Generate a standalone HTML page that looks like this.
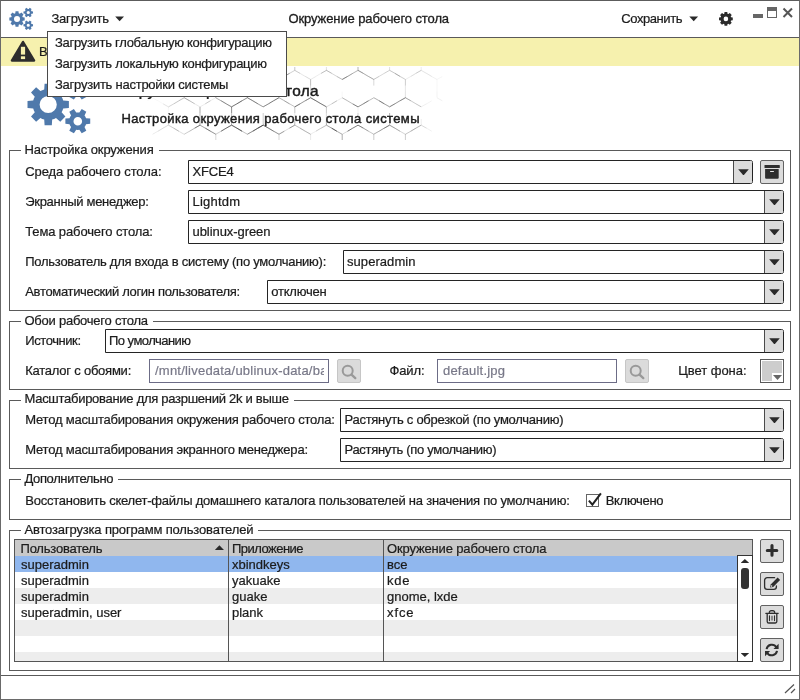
<!DOCTYPE html>
<html lang="ru"><head><meta charset="utf-8"><title>Окружение рабочего стола</title>
<style>
html,body{margin:0;padding:0;background:#fff;}
body{width:800px;height:700px;overflow:hidden;font-family:"Liberation Sans",sans-serif;font-size:13px;color:#1c1c1c;}
#win{position:relative;width:800px;height:700px;background:#fff;overflow:hidden;will-change:transform;}
#win *{box-sizing:border-box;}
.abs,.t,.fs,.combo,.btn,.inp,.row{position:absolute;}
.t{white-space:pre;line-height:16px;height:16px;-webkit-text-stroke:0.22px #1c1c1c;}
.fs{border:1px solid #5a5a5a;}
.combo{height:24px;border:1px solid #242424;border-radius:0 2.5px 2.5px 0;background:#fff;}
.combo i{position:absolute;right:0;top:0;bottom:0;width:19px;background:#dcdcdc;border-left:1px solid #4a4a4a;border-radius:0 1px 1px 0;}
.combo i:after{content:"";position:absolute;left:4.2px;top:8.3px;width:10.6px;height:6.2px;background:#2a2a2a;clip-path:polygon(0 0,100% 0,50% 100%);}
.btn{width:24px;height:24px;border:1px solid #626262;border-radius:2px;background:#dcdcdc;}
.btn.dis{background:#dbdbdb;border-color:#c6c6c6;}
.btn svg{position:absolute;left:0;top:0;}
.inp{height:24px;border:1px solid #6c6c86;background:#fff;color:#787888;white-space:pre;line-height:22px;-webkit-text-stroke:0.2px #787888;}
.inp>div{position:absolute;left:5px;right:4px;top:0;height:22px;overflow:hidden;}
.row{left:15px;width:722px;height:16px;}

</style></head>
<body>
<div id="win">
<!-- header -->
<div class="abs" style="left:1px;top:37px;width:798px;height:1px;background:#5a5a5a"></div>
<svg class="abs" style="left:0;top:0" width="40" height="36" viewBox="0 0 40 36"><path fill="#4f79ab" fill-rule="evenodd" d="M22.75 17.28L24.66 17.54L24.66 20.46L22.75 20.72A6.00 6.00 0 0 1 22.28 21.85L23.45 23.38L21.38 25.45L19.85 24.28A6.00 6.00 0 0 1 18.72 24.75L18.46 26.66L15.54 26.66L15.28 24.75A6.00 6.00 0 0 1 14.15 24.28L12.62 25.45L10.55 23.38L11.72 21.85A6.00 6.00 0 0 1 11.25 20.72L9.34 20.46L9.34 17.54L11.25 17.28A6.00 6.00 0 0 1 11.72 16.15L10.55 14.62L12.62 12.55L14.15 13.72A6.00 6.00 0 0 1 15.28 13.25L15.54 11.34L18.46 11.34L18.72 13.25A6.00 6.00 0 0 1 19.85 13.72L21.38 12.55L23.45 14.62L22.28 16.15A6.00 6.00 0 0 1 22.75 17.28ZM20.00 19.00A3.00 3.00 0 1 0 14.00 19.00A3.00 3.00 0 1 0 20.00 19.00Z"/><path fill="#4f79ab" fill-rule="evenodd" d="M31.50 11.21L33.03 11.43L33.03 13.57L31.50 13.79A3.50 3.50 0 0 1 30.99 14.67L31.57 16.11L29.72 17.18L28.76 15.96A3.50 3.50 0 0 1 27.74 15.96L26.78 17.18L24.93 16.11L25.51 14.67A3.50 3.50 0 0 1 25.00 13.79L23.47 13.57L23.47 11.43L25.00 11.21A3.50 3.50 0 0 1 25.51 10.33L24.93 8.89L26.78 7.82L27.74 9.04A3.50 3.50 0 0 1 28.76 9.04L29.72 7.82L31.57 8.89L30.99 10.33A3.50 3.50 0 0 1 31.50 11.21ZM29.85 12.50A1.60 1.60 0 1 0 26.65 12.50A1.60 1.60 0 1 0 29.85 12.50Z"/><path fill="#4f79ab" fill-rule="evenodd" d="M31.50 23.96L33.03 24.18L33.03 26.32L31.50 26.54A3.50 3.50 0 0 1 30.99 27.42L31.57 28.86L29.72 29.93L28.76 28.71A3.50 3.50 0 0 1 27.74 28.71L26.78 29.93L24.93 28.86L25.51 27.42A3.50 3.50 0 0 1 25.00 26.54L23.47 26.32L23.47 24.18L25.00 23.96A3.50 3.50 0 0 1 25.51 23.08L24.93 21.64L26.78 20.57L27.74 21.79A3.50 3.50 0 0 1 28.76 21.79L29.72 20.57L31.57 21.64L30.99 23.08A3.50 3.50 0 0 1 31.50 23.96ZM29.85 25.25A1.60 1.60 0 1 0 26.65 25.25A1.60 1.60 0 1 0 29.85 25.25Z"/></svg>
<svg class="abs" style="left:113px;top:14px" width="14" height="10" viewBox="113 14 14 10"><path d="M115.2 16.4 H124 L119.6 21.2 Z" fill="#2a2a2a"/></svg>
<svg class="abs" style="left:687px;top:14px" width="14" height="10" viewBox="687 14 14 10"><path d="M689.3 16.4 H698.1 L693.7 21.2 Z" fill="#2a2a2a"/></svg>
<svg class="abs" style="left:716px;top:9px" width="20" height="20" viewBox="716 9 20 20"><path fill="#2b2b2b" fill-rule="evenodd" d="M731.05 17.27L732.77 17.53L732.77 20.27L731.05 20.53A5.40 5.40 0 0 1 730.69 21.39L731.72 22.79L729.79 24.72L728.39 23.69A5.40 5.40 0 0 1 727.53 24.05L727.27 25.77L724.53 25.77L724.27 24.05A5.40 5.40 0 0 1 723.41 23.69L722.01 24.72L720.08 22.79L721.11 21.39A5.40 5.40 0 0 1 720.75 20.53L719.03 20.27L719.03 17.53L720.75 17.27A5.40 5.40 0 0 1 721.11 16.41L720.08 15.01L722.01 13.08L723.41 14.11A5.40 5.40 0 0 1 724.27 13.75L724.53 12.03L727.27 12.03L727.53 13.75A5.40 5.40 0 0 1 728.39 14.11L729.79 13.08L731.72 15.01L730.69 16.41A5.40 5.40 0 0 1 731.05 17.27ZM728.20 18.90A2.30 2.30 0 1 0 723.60 18.90A2.30 2.30 0 1 0 728.20 18.90Z"/></svg>
<!-- window controls -->
<div class="abs" style="left:753px;top:14px;width:10px;height:4px;background:#666"></div>
<div class="abs" style="left:767px;top:7px;width:10px;height:11px;border:1px solid #666;border-top-width:4px"></div>
<svg class="abs" style="left:782px;top:7px" width="12" height="12" viewBox="0 0 12 12"><path d="M1.5 1.5 L10 10 M10 1.5 L1.5 10" stroke="#555" stroke-width="2" fill="none"/></svg>
<!-- yellow bar -->
<div class="abs" style="left:1px;top:38px;width:798px;height:28px;background:#f6f1ae"></div>
<svg class="abs" style="left:10px;top:39px" width="26" height="24" viewBox="0 0 26 24"><path d="M13 2.8 L24.2 21.6 L1.8 21.6 Z" fill="#2d2d2d" stroke="#2d2d2d" stroke-width="2.2" stroke-linejoin="round"/><rect x="10.9" y="7.8" width="4.2" height="7.8" fill="#f6f1ae"/><rect x="10.9" y="17.3" width="4.2" height="2.8" fill="#f6f1ae"/></svg>
<!-- banner -->
<svg class="abs" style="left:110px;top:67px" width="400" height="73" viewBox="110 67 400 73"><g stroke="#333" stroke-width="0.8" fill="none"><path d="M152.6 97.7L147.3 100.7" stroke-opacity="0.04"/><path d="M178.9 76.5L184.2 79.5" stroke-opacity="0.05"/><path d="M184.2 97.7L184.2 91.6" stroke-opacity="0.16"/><path d="M184.2 91.6L184.2 85.6" stroke-opacity="0.26"/><path d="M184.2 85.6L184.2 79.5" stroke-opacity="0.27"/><path d="M184.2 97.7L178.9 100.7" stroke-opacity="0.21"/><path d="M168.4 106.8L163.1 103.8" stroke-opacity="0.11"/><path d="M163.1 103.8L157.9 100.7" stroke-opacity="0.04"/><path d="M152.6 79.5L157.9 76.5" stroke-opacity="0.05"/><path d="M157.9 76.5L163.1 73.4" stroke-opacity="0.05"/><path d="M163.1 73.4L168.4 70.4" stroke-opacity="0.13"/><path d="M200.0 70.4L205.3 73.4" stroke-opacity="0.22"/><path d="M205.3 73.4L210.5 76.5" stroke-opacity="0.37"/><path d="M210.5 76.5L215.8 79.5" stroke-opacity="0.35"/><path d="M215.8 97.7L215.8 91.6" stroke-opacity="0.50"/><path d="M215.8 91.6L215.8 85.6" stroke-opacity="0.32"/><path d="M215.8 85.6L215.8 79.5" stroke-opacity="0.51"/><path d="M215.8 97.7L210.5 100.7" stroke-opacity="0.11"/><path d="M210.5 100.7L205.3 103.8" stroke-opacity="0.34"/><path d="M200.0 106.8L194.7 103.8" stroke-opacity="0.09"/><path d="M194.7 103.8L189.5 100.7" stroke-opacity="0.40"/><path d="M189.5 100.7L184.2 97.7" stroke-opacity="0.40"/><path d="M184.2 79.5L189.5 76.5" stroke-opacity="0.29"/><path d="M189.5 76.5L194.7 73.4" stroke-opacity="0.16"/><path d="M194.7 73.4L200.0 70.4" stroke-opacity="0.31"/><path d="M231.6 70.4L236.9 73.4" stroke-opacity="0.33"/><path d="M236.9 73.4L242.1 76.5" stroke-opacity="0.28"/><path d="M242.1 76.5L247.4 79.5" stroke-opacity="0.43"/><path d="M247.4 97.7L247.4 91.6" stroke-opacity="0.43"/><path d="M247.4 91.6L247.4 85.6" stroke-opacity="0.50"/><path d="M247.4 85.6L247.4 79.5" stroke-opacity="0.26"/><path d="M247.4 97.7L242.1 100.7" stroke-opacity="0.66"/><path d="M242.1 100.7L236.9 103.8" stroke-opacity="0.85"/><path d="M236.9 103.8L231.6 106.8" stroke-opacity="0.78"/><path d="M231.6 106.8L226.3 103.8" stroke-opacity="0.20"/><path d="M226.3 103.8L221.1 100.7" stroke-opacity="0.39"/><path d="M215.8 79.5L221.1 76.5" stroke-opacity="0.10"/><path d="M221.1 76.5L226.3 73.4" stroke-opacity="0.08"/><path d="M226.3 73.4L231.6 70.4" stroke-opacity="0.06"/><path d="M263.2 70.4L268.5 73.4" stroke-opacity="0.21"/><path d="M268.5 73.4L273.7 76.5" stroke-opacity="0.26"/><path d="M273.7 76.5L279.0 79.5" stroke-opacity="0.32"/><path d="M279.0 97.7L279.0 91.6" stroke-opacity="0.24"/><path d="M279.0 91.6L279.0 85.6" stroke-opacity="0.39"/><path d="M279.0 85.6L279.0 79.5" stroke-opacity="0.43"/><path d="M279.0 97.7L273.7 100.7" stroke-opacity="0.85"/><path d="M273.7 100.7L268.5 103.8" stroke-opacity="0.85"/><path d="M268.5 103.8L263.2 106.8" stroke-opacity="0.54"/><path d="M263.2 106.8L257.9 103.8" stroke-opacity="0.27"/><path d="M257.9 103.8L252.7 100.7" stroke-opacity="0.63"/><path d="M252.7 100.7L247.4 97.7" stroke-opacity="0.68"/><path d="M294.8 70.4L300.1 73.4" stroke-opacity="0.29"/><path d="M300.1 73.4L305.3 76.5" stroke-opacity="0.15"/><path d="M305.3 76.5L310.6 79.5" stroke-opacity="0.05"/><path d="M310.6 97.7L310.6 91.6" stroke-opacity="0.17"/><path d="M310.6 91.6L310.6 85.6" stroke-opacity="0.25"/><path d="M310.6 85.6L310.6 79.5" stroke-opacity="0.41"/><path d="M310.6 97.7L305.3 100.7" stroke-opacity="0.57"/><path d="M305.3 100.7L300.1 103.8" stroke-opacity="0.63"/><path d="M300.1 103.8L294.8 106.8" stroke-opacity="0.67"/><path d="M294.8 106.8L289.5 103.8" stroke-opacity="0.39"/><path d="M289.5 103.8L284.3 100.7" stroke-opacity="0.31"/><path d="M284.3 100.7L279.0 97.7" stroke-opacity="0.38"/><path d="M279.0 79.5L284.3 76.5" stroke-opacity="0.33"/><path d="M284.3 76.5L289.5 73.4" stroke-opacity="0.34"/><path d="M289.5 73.4L294.8 70.4" stroke-opacity="0.21"/><path d="M326.4 70.4L331.7 73.4" stroke-opacity="0.13"/><path d="M331.7 73.4L336.9 76.5" stroke-opacity="0.13"/><path d="M336.9 76.5L342.2 79.5" stroke-opacity="0.19"/><path d="M342.2 97.7L342.2 91.6" stroke-opacity="0.05"/><path d="M336.9 100.7L331.7 103.8" stroke-opacity="0.10"/><path d="M326.4 106.8L321.1 103.8" stroke-opacity="0.76"/><path d="M321.1 103.8L315.9 100.7" stroke-opacity="0.44"/><path d="M315.9 100.7L310.6 97.7" stroke-opacity="0.51"/><path d="M310.6 79.5L315.9 76.5" stroke-opacity="0.14"/><path d="M321.1 73.4L326.4 70.4" stroke-opacity="0.34"/><path d="M358.0 70.4L363.3 73.4" stroke-opacity="0.44"/><path d="M363.3 73.4L368.5 76.5" stroke-opacity="0.45"/><path d="M368.5 76.5L373.8 79.5" stroke-opacity="0.29"/><path d="M373.8 85.6L373.8 79.5" stroke-opacity="0.23"/><path d="M368.5 100.7L363.3 103.8" stroke-opacity="0.50"/><path d="M363.3 103.8L358.0 106.8" stroke-opacity="0.21"/><path d="M358.0 106.8L352.7 103.8" stroke-opacity="0.21"/><path d="M347.5 100.7L342.2 97.7" stroke-opacity="0.20"/><path d="M342.2 79.5L347.5 76.5" stroke-opacity="0.51"/><path d="M347.5 76.5L352.7 73.4" stroke-opacity="0.51"/><path d="M352.7 73.4L358.0 70.4" stroke-opacity="0.35"/><path d="M389.6 70.4L394.9 73.4" stroke-opacity="0.06"/><path d="M394.9 73.4L400.1 76.5" stroke-opacity="0.24"/><path d="M400.1 76.5L405.4 79.5" stroke-opacity="0.14"/><path d="M405.4 97.7L405.4 91.6" stroke-opacity="0.19"/><path d="M405.4 91.6L405.4 85.6" stroke-opacity="0.16"/><path d="M405.4 85.6L405.4 79.5" stroke-opacity="0.31"/><path d="M405.4 97.7L400.1 100.7" stroke-opacity="0.57"/><path d="M400.1 100.7L394.9 103.8" stroke-opacity="0.65"/><path d="M394.9 103.8L389.6 106.8" stroke-opacity="0.73"/><path d="M389.6 106.8L384.3 103.8" stroke-opacity="0.39"/><path d="M384.3 103.8L379.1 100.7" stroke-opacity="0.60"/><path d="M379.1 100.7L373.8 97.7" stroke-opacity="0.49"/><path d="M421.2 70.4L426.5 73.4" stroke-opacity="0.17"/><path d="M426.5 73.4L431.7 76.5" stroke-opacity="0.08"/><path d="M431.7 76.5L437.0 79.5" stroke-opacity="0.09"/><path d="M437.0 97.7L437.0 91.6" stroke-opacity="0.07"/><path d="M437.0 91.6L437.0 85.6" stroke-opacity="0.06"/><path d="M437.0 85.6L437.0 79.5" stroke-opacity="0.05"/><path d="M426.5 103.8L421.2 106.8" stroke-opacity="0.10"/><path d="M421.2 106.8L415.9 103.8" stroke-opacity="0.34"/><path d="M415.9 103.8L410.7 100.7" stroke-opacity="0.33"/><path d="M410.7 100.7L405.4 97.7" stroke-opacity="0.46"/><path d="M405.4 79.5L410.7 76.5" stroke-opacity="0.12"/><path d="M410.7 76.5L415.9 73.4" stroke-opacity="0.22"/><path d="M415.9 73.4L421.2 70.4" stroke-opacity="0.21"/><path d="M437.0 79.5L442.3 76.5" stroke-opacity="0.06"/><path d="M152.6 97.8L157.9 100.8" stroke-opacity="0.05"/><path d="M163.1 103.9L168.4 106.9" stroke-opacity="0.06"/><path d="M168.4 125.1L168.4 119.0" stroke-opacity="0.16"/><path d="M168.4 113.0L168.4 106.9" stroke-opacity="0.05"/><path d="M168.4 125.1L163.1 128.1" stroke-opacity="0.24"/><path d="M163.1 128.1L157.9 131.2" stroke-opacity="0.10"/><path d="M157.9 131.2L152.6 134.2" stroke-opacity="0.08"/><path d="M184.2 97.8L189.5 100.8" stroke-opacity="0.19"/><path d="M194.7 103.9L200.0 106.9" stroke-opacity="0.06"/><path d="M200.0 125.1L200.0 119.0" stroke-opacity="0.56"/><path d="M200.0 119.0L200.0 113.0" stroke-opacity="0.42"/><path d="M200.0 113.0L200.0 106.9" stroke-opacity="0.53"/><path d="M200.0 125.1L194.7 128.1" stroke-opacity="0.56"/><path d="M194.7 128.1L189.5 131.2" stroke-opacity="0.15"/><path d="M189.5 131.2L184.2 134.2" stroke-opacity="0.20"/><path d="M178.9 131.2L173.7 128.1" stroke-opacity="0.21"/><path d="M173.7 128.1L168.4 125.1" stroke-opacity="0.10"/><path d="M168.4 106.9L173.7 103.9" stroke-opacity="0.26"/><path d="M173.7 103.9L178.9 100.8" stroke-opacity="0.36"/><path d="M178.9 100.8L184.2 97.8" stroke-opacity="0.24"/><path d="M215.8 97.8L221.1 100.8" stroke-opacity="0.51"/><path d="M221.1 100.8L226.3 103.9" stroke-opacity="0.51"/><path d="M226.3 103.9L231.6 106.9" stroke-opacity="0.63"/><path d="M231.6 125.1L231.6 119.0" stroke-opacity="0.42"/><path d="M231.6 119.0L231.6 113.0" stroke-opacity="0.38"/><path d="M231.6 113.0L231.6 106.9" stroke-opacity="0.69"/><path d="M231.6 125.1L226.3 128.1" stroke-opacity="0.82"/><path d="M226.3 128.1L221.1 131.2" stroke-opacity="0.85"/><path d="M221.1 131.2L215.8 134.2" stroke-opacity="0.24"/><path d="M215.8 134.2L210.5 131.2" stroke-opacity="0.46"/><path d="M210.5 131.2L205.3 128.1" stroke-opacity="0.70"/><path d="M205.3 128.1L200.0 125.1" stroke-opacity="0.21"/><path d="M200.0 106.9L205.3 103.9" stroke-opacity="0.12"/><path d="M247.4 97.8L252.7 100.8" stroke-opacity="0.25"/><path d="M252.7 100.8L257.9 103.9" stroke-opacity="0.33"/><path d="M257.9 103.9L263.2 106.9" stroke-opacity="0.40"/><path d="M263.2 125.1L263.2 119.0" stroke-opacity="0.34"/><path d="M263.2 119.0L263.2 113.0" stroke-opacity="0.30"/><path d="M263.2 125.1L257.9 128.1" stroke-opacity="0.85"/><path d="M257.9 128.1L252.7 131.2" stroke-opacity="0.49"/><path d="M252.7 131.2L247.4 134.2" stroke-opacity="0.51"/><path d="M247.4 134.2L242.1 131.2" stroke-opacity="0.21"/><path d="M242.1 131.2L236.9 128.1" stroke-opacity="0.69"/><path d="M236.9 128.1L231.6 125.1" stroke-opacity="0.58"/><path d="M231.6 106.9L236.9 103.9" stroke-opacity="0.15"/><path d="M236.9 103.9L242.1 100.8" stroke-opacity="0.21"/><path d="M242.1 100.8L247.4 97.8" stroke-opacity="0.09"/><path d="M279.0 97.8L284.3 100.8" stroke-opacity="0.09"/><path d="M284.3 100.8L289.5 103.9" stroke-opacity="0.37"/><path d="M294.8 125.1L294.8 119.0" stroke-opacity="0.42"/><path d="M294.8 119.0L294.8 113.0" stroke-opacity="0.13"/><path d="M294.8 113.0L294.8 106.9" stroke-opacity="0.35"/><path d="M294.8 125.1L289.5 128.1" stroke-opacity="0.52"/><path d="M289.5 128.1L284.3 131.2" stroke-opacity="0.21"/><path d="M284.3 131.2L279.0 134.2" stroke-opacity="0.50"/><path d="M279.0 134.2L273.7 131.2" stroke-opacity="0.51"/><path d="M273.7 131.2L268.5 128.1" stroke-opacity="0.35"/><path d="M268.5 128.1L263.2 125.1" stroke-opacity="0.46"/><path d="M263.2 106.9L268.5 103.9" stroke-opacity="0.30"/><path d="M310.6 97.8L315.9 100.8" stroke-opacity="0.65"/><path d="M315.9 100.8L321.1 103.9" stroke-opacity="0.59"/><path d="M321.1 103.9L326.4 106.9" stroke-opacity="0.21"/><path d="M326.4 125.1L326.4 119.0" stroke-opacity="0.47"/><path d="M326.4 119.0L326.4 113.0" stroke-opacity="0.23"/><path d="M326.4 113.0L326.4 106.9" stroke-opacity="0.32"/><path d="M321.1 128.1L315.9 131.2" stroke-opacity="0.27"/><path d="M315.9 131.2L310.6 134.2" stroke-opacity="0.06"/><path d="M310.6 134.2L305.3 131.2" stroke-opacity="0.26"/><path d="M305.3 131.2L300.1 128.1" stroke-opacity="0.23"/><path d="M300.1 128.1L294.8 125.1" stroke-opacity="0.34"/><path d="M294.8 106.9L300.1 103.9" stroke-opacity="0.38"/><path d="M305.3 100.8L310.6 97.8" stroke-opacity="0.39"/><path d="M342.2 97.8L347.5 100.8" stroke-opacity="0.28"/><path d="M347.5 100.8L352.7 103.9" stroke-opacity="0.43"/><path d="M352.7 103.9L358.0 106.9" stroke-opacity="0.68"/><path d="M358.0 119.0L358.0 113.0" stroke-opacity="0.29"/><path d="M358.0 113.0L358.0 106.9" stroke-opacity="0.09"/><path d="M342.2 134.2L336.9 131.2" stroke-opacity="0.10"/><path d="M336.9 131.2L331.7 128.1" stroke-opacity="0.47"/><path d="M331.7 128.1L326.4 125.1" stroke-opacity="0.15"/><path d="M326.4 106.9L331.7 103.9" stroke-opacity="0.21"/><path d="M331.7 103.9L336.9 100.8" stroke-opacity="0.32"/><path d="M336.9 100.8L342.2 97.8" stroke-opacity="0.10"/><path d="M379.1 100.8L384.3 103.9" stroke-opacity="0.41"/><path d="M384.3 103.9L389.6 106.9" stroke-opacity="0.28"/><path d="M389.6 125.1L389.6 119.0" stroke-opacity="0.18"/><path d="M389.6 119.0L389.6 113.0" stroke-opacity="0.46"/><path d="M389.6 125.1L384.3 128.1" stroke-opacity="0.57"/><path d="M384.3 128.1L379.1 131.2" stroke-opacity="0.64"/><path d="M379.1 131.2L373.8 134.2" stroke-opacity="0.51"/><path d="M373.8 134.2L368.5 131.2" stroke-opacity="0.21"/><path d="M368.5 131.2L363.3 128.1" stroke-opacity="0.48"/><path d="M363.3 128.1L358.0 125.1" stroke-opacity="0.68"/><path d="M358.0 106.9L363.3 103.9" stroke-opacity="0.54"/><path d="M363.3 103.9L368.5 100.8" stroke-opacity="0.46"/><path d="M368.5 100.8L373.8 97.8" stroke-opacity="0.41"/><path d="M405.4 97.8L410.7 100.8" stroke-opacity="0.15"/><path d="M415.9 103.9L421.2 106.9" stroke-opacity="0.04"/><path d="M421.2 125.1L421.2 119.0" stroke-opacity="0.11"/><path d="M421.2 125.1L415.9 128.1" stroke-opacity="0.15"/><path d="M415.9 128.1L410.7 131.2" stroke-opacity="0.19"/><path d="M410.7 131.2L405.4 134.2" stroke-opacity="0.09"/><path d="M400.1 131.2L394.9 128.1" stroke-opacity="0.10"/><path d="M394.9 128.1L389.6 125.1" stroke-opacity="0.21"/><path d="M389.6 106.9L394.9 103.9" stroke-opacity="0.13"/><path d="M400.1 100.8L405.4 97.8" stroke-opacity="0.34"/><path d="M437.0 97.8L442.3 100.8" stroke-opacity="0.09"/><path d="M431.7 131.2L426.5 128.1" stroke-opacity="0.09"/><path d="M426.5 128.1L421.2 125.1" stroke-opacity="0.05"/><path d="M426.5 103.9L431.7 100.8" stroke-opacity="0.07"/><path d="M168.4 125.2L173.7 128.2" stroke-opacity="0.22"/><path d="M173.7 128.2L178.9 131.3" stroke-opacity="0.27"/><path d="M178.9 131.3L184.2 134.3" stroke-opacity="0.20"/><path d="M152.6 134.3L157.9 131.3" stroke-opacity="0.05"/><path d="M157.9 131.3L163.1 128.2" stroke-opacity="0.13"/><path d="M200.0 125.2L205.3 128.2" stroke-opacity="0.40"/><path d="M205.3 128.2L210.5 131.3" stroke-opacity="0.30"/><path d="M210.5 131.3L215.8 134.3" stroke-opacity="0.26"/><path d="M215.8 140.4L215.8 134.3" stroke-opacity="0.23"/><path d="M184.2 134.3L189.5 131.3" stroke-opacity="0.14"/><path d="M189.5 131.3L194.7 128.2" stroke-opacity="0.31"/><path d="M194.7 128.2L200.0 125.2" stroke-opacity="0.47"/><path d="M231.6 125.2L236.9 128.2" stroke-opacity="0.69"/><path d="M236.9 128.2L242.1 131.3" stroke-opacity="0.70"/><path d="M242.1 131.3L247.4 134.3" stroke-opacity="0.19"/><path d="M215.8 134.3L221.1 131.3" stroke-opacity="0.08"/><path d="M221.1 131.3L226.3 128.2" stroke-opacity="0.17"/><path d="M226.3 128.2L231.6 125.2" stroke-opacity="0.31"/><path d="M263.2 125.2L268.5 128.2" stroke-opacity="0.67"/><path d="M268.5 128.2L273.7 131.3" stroke-opacity="0.66"/><path d="M273.7 131.3L279.0 134.3" stroke-opacity="0.24"/><path d="M279.0 140.4L279.0 134.3" stroke-opacity="0.25"/><path d="M247.4 134.3L252.7 131.3" stroke-opacity="0.29"/><path d="M252.7 131.3L257.9 128.2" stroke-opacity="0.85"/><path d="M257.9 128.2L263.2 125.2" stroke-opacity="0.85"/><path d="M294.8 125.2L300.1 128.2" stroke-opacity="0.07"/><path d="M300.1 128.2L305.3 131.3" stroke-opacity="0.31"/><path d="M305.3 131.3L310.6 134.3" stroke-opacity="0.25"/><path d="M310.6 140.4L310.6 134.3" stroke-opacity="0.14"/><path d="M279.0 134.3L284.3 131.3" stroke-opacity="0.17"/><path d="M289.5 128.2L294.8 125.2" stroke-opacity="0.24"/><path d="M326.4 125.2L331.7 128.2" stroke-opacity="0.48"/><path d="M331.7 128.2L336.9 131.3" stroke-opacity="0.85"/><path d="M336.9 131.3L342.2 134.3" stroke-opacity="0.44"/><path d="M342.2 140.4L342.2 134.3" stroke-opacity="0.50"/><path d="M310.6 134.3L315.9 131.3" stroke-opacity="0.06"/><path d="M315.9 131.3L321.1 128.2" stroke-opacity="0.08"/><path d="M321.1 128.2L326.4 125.2" stroke-opacity="0.41"/><path d="M358.0 125.2L363.3 128.2" stroke-opacity="0.26"/><path d="M363.3 128.2L368.5 131.3" stroke-opacity="0.15"/><path d="M368.5 131.3L373.8 134.3" stroke-opacity="0.17"/><path d="M373.8 140.4L373.8 134.3" stroke-opacity="0.32"/><path d="M342.2 134.3L347.5 131.3" stroke-opacity="0.24"/><path d="M347.5 131.3L352.7 128.2" stroke-opacity="0.85"/><path d="M352.7 128.2L358.0 125.2" stroke-opacity="0.80"/><path d="M389.6 125.2L394.9 128.2" stroke-opacity="0.48"/><path d="M394.9 128.2L400.1 131.3" stroke-opacity="0.47"/><path d="M400.1 131.3L405.4 134.3" stroke-opacity="0.25"/><path d="M405.4 140.4L405.4 134.3" stroke-opacity="0.31"/><path d="M384.3 128.2L389.6 125.2" stroke-opacity="0.48"/><path d="M421.2 125.2L426.5 128.2" stroke-opacity="0.19"/><path d="M405.4 134.3L410.7 131.3" stroke-opacity="0.29"/><path d="M410.7 131.3L415.9 128.2" stroke-opacity="0.38"/><path d="M415.9 128.2L421.2 125.2" stroke-opacity="0.34"/><path d="M163.1 73.3L157.9 76.4" stroke-opacity="0.04"/><path d="M157.9 76.4L152.6 79.4" stroke-opacity="0.05"/><path d="M200.0 70.3L194.7 73.3" stroke-opacity="0.30"/><path d="M189.5 76.4L184.2 79.4" stroke-opacity="0.11"/><path d="M184.2 79.4L178.9 76.4" stroke-opacity="0.26"/><path d="M178.9 76.4L173.7 73.3" stroke-opacity="0.09"/><path d="M173.7 73.3L168.4 70.3" stroke-opacity="0.09"/><path d="M231.6 70.3L231.6 64.2" stroke-opacity="0.42"/><path d="M231.6 70.3L226.3 73.3" stroke-opacity="0.51"/><path d="M226.3 73.3L221.1 76.4" stroke-opacity="0.20"/><path d="M221.1 76.4L215.8 79.4" stroke-opacity="0.21"/><path d="M215.8 79.4L210.5 76.4" stroke-opacity="0.50"/><path d="M210.5 76.4L205.3 73.3" stroke-opacity="0.33"/><path d="M205.3 73.3L200.0 70.3" stroke-opacity="0.36"/><path d="M263.2 70.3L263.2 64.2" stroke-opacity="0.51"/><path d="M263.2 70.3L257.9 73.3" stroke-opacity="0.51"/><path d="M257.9 73.3L252.7 76.4" stroke-opacity="0.30"/><path d="M252.7 76.4L247.4 79.4" stroke-opacity="0.24"/><path d="M247.4 79.4L242.1 76.4" stroke-opacity="0.12"/><path d="M242.1 76.4L236.9 73.3" stroke-opacity="0.19"/><path d="M236.9 73.3L231.6 70.3" stroke-opacity="0.29"/><path d="M294.8 70.3L294.8 64.2" stroke-opacity="0.35"/><path d="M294.8 70.3L289.5 73.3" stroke-opacity="0.09"/><path d="M289.5 73.3L284.3 76.4" stroke-opacity="0.39"/><path d="M284.3 76.4L279.0 79.4" stroke-opacity="0.17"/><path d="M279.0 79.4L273.7 76.4" stroke-opacity="0.49"/><path d="M273.7 76.4L268.5 73.3" stroke-opacity="0.35"/><path d="M268.5 73.3L263.2 70.3" stroke-opacity="0.27"/><path d="M326.4 70.3L326.4 64.2" stroke-opacity="0.18"/><path d="M326.4 70.3L321.1 73.3" stroke-opacity="0.09"/><path d="M321.1 73.3L315.9 76.4" stroke-opacity="0.11"/><path d="M310.6 79.4L305.3 76.4" stroke-opacity="0.18"/><path d="M300.1 73.3L294.8 70.3" stroke-opacity="0.06"/><path d="M358.0 70.3L358.0 64.2" stroke-opacity="0.47"/><path d="M358.0 70.3L352.7 73.3" stroke-opacity="0.14"/><path d="M352.7 73.3L347.5 76.4" stroke-opacity="0.14"/><path d="M347.5 76.4L342.2 79.4" stroke-opacity="0.43"/><path d="M342.2 79.4L336.9 76.4" stroke-opacity="0.26"/><path d="M336.9 76.4L331.7 73.3" stroke-opacity="0.14"/><path d="M331.7 73.3L326.4 70.3" stroke-opacity="0.34"/><path d="M389.6 70.3L389.6 64.2" stroke-opacity="0.20"/><path d="M389.6 70.3L384.3 73.3" stroke-opacity="0.30"/><path d="M384.3 73.3L379.1 76.4" stroke-opacity="0.24"/><path d="M379.1 76.4L373.8 79.4" stroke-opacity="0.36"/><path d="M373.8 79.4L368.5 76.4" stroke-opacity="0.30"/><path d="M368.5 76.4L363.3 73.3" stroke-opacity="0.10"/><path d="M363.3 73.3L358.0 70.3" stroke-opacity="0.34"/><path d="M421.2 70.3L421.2 64.2" stroke-opacity="0.12"/><path d="M421.2 70.3L415.9 73.3" stroke-opacity="0.13"/><path d="M405.4 79.4L400.1 76.4" stroke-opacity="0.19"/><path d="M400.1 76.4L394.9 73.3" stroke-opacity="0.39"/><path d="M394.9 73.3L389.6 70.3" stroke-opacity="0.31"/><path d="M431.7 76.4L426.5 73.3" stroke-opacity="0.10"/></g></svg>
<svg class="abs" style="left:20px;top:67px" width="80" height="73" viewBox="20 67 80 73"><path fill="#4f79ab" fill-rule="evenodd" d="M63.18 100.53L68.89 100.89L68.89 108.11L63.18 108.47A15.50 15.50 0 0 1 61.60 112.29L65.38 116.58L60.28 121.68L55.99 117.90A15.50 15.50 0 0 1 52.17 119.48L51.81 125.19L44.59 125.19L44.23 119.48A15.50 15.50 0 0 1 40.41 117.90L36.12 121.68L31.02 116.58L34.80 112.29A15.50 15.50 0 0 1 33.22 108.47L27.51 108.11L27.51 100.89L33.22 100.53A15.50 15.50 0 0 1 34.80 96.71L31.02 92.42L36.12 87.32L40.41 91.10A15.50 15.50 0 0 1 44.23 89.52L44.59 83.81L51.81 83.81L52.17 89.52A15.50 15.50 0 0 1 55.99 91.10L60.28 87.32L65.38 92.42L61.60 96.71A15.50 15.50 0 0 1 63.18 100.53ZM56.80 104.50A8.60 8.60 0 1 0 39.60 104.50A8.60 8.60 0 1 0 56.80 104.50Z"/><path fill="#4f79ab" fill-rule="evenodd" d="M86.08 118.22L90.22 118.56L90.22 123.84L86.08 124.18A8.80 8.80 0 0 1 84.52 126.88L86.30 130.64L81.72 133.28L79.36 129.86A8.80 8.80 0 0 1 76.24 129.86L73.88 133.28L69.30 130.64L71.08 126.88A8.80 8.80 0 0 1 69.52 124.18L65.38 123.84L65.38 118.56L69.52 118.22A8.80 8.80 0 0 1 71.08 115.52L69.30 111.76L73.88 109.12L76.24 112.54A8.80 8.80 0 0 1 79.36 112.54L81.72 109.12L86.30 111.76L84.52 115.52A8.80 8.80 0 0 1 86.08 118.22ZM82.10 121.20A4.30 4.30 0 1 0 73.50 121.20A4.30 4.30 0 1 0 82.10 121.20Z"/><path fill="#4f79ab" fill-rule="evenodd" d="M86.08 84.52L90.22 84.86L90.22 90.14L86.08 90.48A8.80 8.80 0 0 1 84.52 93.18L86.30 96.94L81.72 99.58L79.36 96.16A8.80 8.80 0 0 1 76.24 96.16L73.88 99.58L69.30 96.94L71.08 93.18A8.80 8.80 0 0 1 69.52 90.48L65.38 90.14L65.38 84.86L69.52 84.52A8.80 8.80 0 0 1 71.08 81.82L69.30 78.06L73.88 75.42L76.24 78.84A8.80 8.80 0 0 1 79.36 78.84L81.72 75.42L86.30 78.06L84.52 81.82A8.80 8.80 0 0 1 86.08 84.52ZM82.10 87.50A4.30 4.30 0 1 0 73.50 87.50A4.30 4.30 0 1 0 82.10 87.50Z"/></svg>
<!-- fieldsets -->
<div class="fs" style="left:9px;top:150px;width:782px;height:161px"></div>
<div class="fs" style="left:9px;top:321px;width:782px;height:69px"></div>
<div class="fs" style="left:9px;top:400px;width:782px;height:69px"></div>
<div class="fs" style="left:9px;top:479px;width:782px;height:41px"></div>
<div class="fs" style="left:9px;top:530px;width:782px;height:141px"></div>
<!-- section 1 -->
<div class="combo" style="left:188px;top:160px;width:565px"><i></i></div>
<div class="btn" style="left:760px;top:160px" id="b-arch"><svg width="22" height="22" viewBox="1 1 22 22"><rect x="4.5" y="5" width="15.3" height="3" rx="0.6" fill="#2e2e2e"/><path d="M5.1 9 H18.7 V17.7 a1 1 0 0 1 -1 1 H6.1 a1 1 0 0 1 -1 -1 Z" fill="#2e2e2e"/><rect x="10" y="10.9" width="4" height="1.1" rx="0.5" fill="#e8e8e8"/></svg></div>
<div class="combo" style="left:188px;top:190px;width:596px"><i></i></div>
<div class="combo" style="left:188px;top:220px;width:596px"><i></i></div>
<div class="combo" style="left:343px;top:250px;width:441px"><i></i></div>
<div class="combo" style="left:267px;top:280px;width:517px"><i></i></div>
<!-- section 2 -->
<div class="combo" style="left:105px;top:329px;width:679px"><i></i></div>
<div class="inp" style="left:149px;top:359px;width:180px"><div style="letter-spacing:0.22px">/mnt/livedata/ublinux-data/backgrounds</div></div>
<div class="btn dis" style="left:337px;top:359px"><svg width="22" height="22" viewBox="0 0 22 22"><circle cx="9.7" cy="10.8" r="5" fill="none" stroke="#999" stroke-width="2"/><path d="M13.5 14.6 L17.3 18.1" stroke="#999" stroke-width="2.3" stroke-linecap="round"/></svg></div>
<div class="inp" style="left:437px;top:359px;width:180px"><div style="letter-spacing:0.2px">default.jpg</div></div>
<div class="btn dis" style="left:625px;top:359px"><svg width="22" height="22" viewBox="0 0 22 22"><circle cx="9.7" cy="10.8" r="5" fill="none" stroke="#999" stroke-width="2"/><path d="M13.5 14.6 L17.3 18.1" stroke="#999" stroke-width="2.3" stroke-linecap="round"/></svg></div>
<div class="abs" style="left:760px;top:359px;width:24px;height:24px;border:1px solid #5a5a5a;background:#fff"><div class="abs" style="left:1px;top:1px;width:20px;height:20px;background:#cdcdcd"></div><div class="abs" style="left:11px;top:13px;width:11px;height:9px;background:#fff"></div><div class="abs" style="left:12px;top:15px;width:9px;height:5px;background:#666;clip-path:polygon(0 0,100% 0,50% 100%)"></div></div>
<!-- section 3 -->
<div class="combo" style="left:340px;top:408px;width:444px"><i></i></div>
<div class="combo" style="left:340px;top:438px;width:444px"><i></i></div>
<!-- section 4 checkbox -->
<div class="abs" style="left:586px;top:494px;width:13px;height:13px;border:1px solid #666;background:#fff"></div>
<svg class="abs" style="left:584px;top:489px" width="20" height="20" viewBox="584 489 20 20"><path d="M588.9 500.6 L592.4 504.6 L600.9 493.4" stroke="#222" stroke-width="2" fill="none" stroke-linejoin="miter"/></svg>
<!-- table -->
<div class="abs" style="left:14px;top:539px;width:739px;height:123px;border:1px solid #555;background:#fff"></div>
<div class="abs" style="left:15px;top:540px;width:737px;height:16px;background:#c9c9c9"></div>
<div class="row" style="top:556px;background:#90b7ee"></div>
<div class="row" style="top:588px;background:#ededed"></div>
<div class="row" style="top:620px;background:#ededed"></div>
<div class="row" style="top:652px;height:9px;background:#ededed"></div>
<div class="abs" style="left:228px;top:540px;width:1px;height:121px;background:#555"></div>
<div class="abs" style="left:383px;top:540px;width:1px;height:121px;background:#555"></div>
<div class="abs" style="left:214.6px;top:545.2px;width:9.6px;height:5px;background:#2a2a2a;clip-path:polygon(0 100%,100% 100%,50% 0)"></div>
<!-- scrollbar -->
<div class="abs" style="left:737px;top:555px;width:16px;height:107px;border:1px solid #333;background:#fff"></div>
<div class="abs" style="left:740.6px;top:559px;width:8.6px;height:4px;background:#2a2a2a;clip-path:polygon(0 100%,100% 100%,50% 0)"></div>
<div class="abs" style="left:740.6px;top:653px;width:8.6px;height:4px;background:#2a2a2a;clip-path:polygon(0 0,100% 0,50% 100%)"></div>
<div class="abs" style="left:741px;top:568px;width:8px;height:21px;border-radius:3px;background:#333"></div>
<!-- side buttons -->
<div class="btn" style="left:760px;top:539px" id="b-add"><svg width="22" height="22" viewBox="1 1 22 22"><path d="M7.3 11.5 H16.8 M12 6.6 V16.2" stroke="#2e2e2e" stroke-width="3.1" stroke-linecap="round" fill="none"/></svg></div>
<div class="btn" style="left:760px;top:572px" id="b-edit"><svg width="22" height="22" viewBox="1 1 22 22"><path d="M14.6 5.7 H7.2 a2.6 2.6 0 0 0 -2.6 2.6 V14.8 a2.6 2.6 0 0 0 2.6 2.6 H13.8 a2.6 2.6 0 0 0 2.6 -2.6 V13.9" stroke="#2e2e2e" stroke-width="1.3" fill="none" stroke-linecap="round"/><path d="M10.1 15.6 L10.7 12.4 L17.6 5.5 L20.1 8 L13.2 14.9 Z" fill="#2e2e2e"/><circle cx="11.6" cy="14.1" r="0.8" fill="#e0e0e0"/></svg></div>
<div class="btn" style="left:760px;top:605px" id="b-del"><svg width="22" height="22" viewBox="1 1 22 22"><path d="M5.8 8.3 H18.2" stroke="#2e2e2e" stroke-width="1.2" stroke-linecap="round"/><path d="M9.3 8.1 V7.4 a1.9 1.9 0 0 1 1.9 -1.9 H12.8 a1.9 1.9 0 0 1 1.9 1.9 V8.1" stroke="#2e2e2e" stroke-width="1.2" fill="#999"/><path d="M7.2 8.6 V16.4 a1.6 1.6 0 0 0 1.6 1.6 H15.2 a1.6 1.6 0 0 0 1.6 -1.6 V8.6" stroke="#2e2e2e" stroke-width="1.3" fill="none"/><path d="M9.5 10.8 V15.6 M14.5 10.8 V15.6" stroke="#2e2e2e" stroke-width="1.1" stroke-linecap="round"/><path d="M12 10.8 V15.6" stroke="#777" stroke-width="1.6"/></svg></div>
<div class="btn" style="left:760px;top:638px" id="b-ref"><svg width="22" height="22" viewBox="1 1 22 22"><path d="M6.58 11.08 A5.3 5.3 0 0 1 16.39 9.35" stroke="#2e2e2e" stroke-width="2" fill="none"/><path d="M18.6 5.8 V10.9 H13.5 Z" fill="#2e2e2e"/><path d="M17.02 12.92 A5.3 5.3 0 0 1 7.21 14.65" stroke="#2e2e2e" stroke-width="2" fill="none"/><path d="M5 18.2 V13.1 H10.1 Z" fill="#2e2e2e"/></svg></div>
<!-- status bar -->
<div class="abs" style="left:1px;top:675px;width:798px;height:1px;background:#5a5a5a"></div>
<svg class="abs" style="left:783px;top:682px" width="14" height="14" viewBox="0 0 14 14"><path d="M2 11 L11 2.5 M8 11 L12 7" stroke="#555" stroke-width="1.2" fill="none"/></svg>
<span class="t" style="left:51.50px;top:11px;letter-spacing:-0.232px;">Загрузить</span>
<span class="t" style="left:288.50px;top:11px;letter-spacing:-0.103px;-webkit-text-stroke:0.3px #1c1c1c">Окружение рабочего стола</span>
<span class="t" style="left:621.25px;top:11px;letter-spacing:-0.420px;">Сохранить</span>
<span class="t" style="left:121.50px;top:111px;letter-spacing:0.373px;-webkit-text-stroke:0.45px #1c1c1c">Настройка окружения рабочего стола системы</span>
<span class="t" style="left:119.50px;top:84px;letter-spacing:0.264px;font-size:15.4px;-webkit-text-stroke:0.45px #1c1c1c;line-height:20px;height:18px;overflow:hidden;margin-top:-3px">Окружение рабочего стола</span>
<span class="t" style="left:39.00px;top:44px;letter-spacing:0.000px;">В</span>
<span class="t" style="left:24.50px;top:142px;letter-spacing:-0.135px;background:#fff;padding:0 5px 0 4px;margin-left:-4px">Настройка окружения</span>
<span class="t" style="left:24.50px;top:313px;letter-spacing:-0.244px;background:#fff;padding:0 5px 0 4px;margin-left:-4px">Обои рабочего стола</span>
<span class="t" style="left:24.50px;top:391px;letter-spacing:-0.280px;background:#fff;padding:0 5px 0 4px;margin-left:-4px">Масштабирование для разршений 2k и выше</span>
<span class="t" style="left:24.50px;top:471px;letter-spacing:-0.382px;background:#fff;padding:0 5px 0 4px;margin-left:-4px">Дополнительно</span>
<span class="t" style="left:24.50px;top:522px;letter-spacing:-0.160px;background:#fff;padding:0 5px 0 4px;margin-left:-4px">Автозагрузка программ пользователей</span>
<span class="t" style="left:25.25px;top:164px;letter-spacing:-0.079px;">Среда рабочего стола:</span>
<span class="t" style="left:25.25px;top:194px;letter-spacing:-0.307px;">Экранный менеджер:</span>
<span class="t" style="left:25.25px;top:224px;letter-spacing:-0.122px;">Тема рабочего стола:</span>
<span class="t" style="left:25.25px;top:254px;letter-spacing:-0.262px;">Пользователь для входа в систему (по умолчанию):</span>
<span class="t" style="left:25.25px;top:284px;letter-spacing:-0.324px;">Автоматический логин пользователя:</span>
<span class="t" style="left:192.50px;top:164px;letter-spacing:-0.164px;">XFCE4</span>
<span class="t" style="left:192.50px;top:194px;letter-spacing:0.208px;">Lightdm</span>
<span class="t" style="left:192.50px;top:224px;letter-spacing:-0.065px;">ublinux-green</span>
<span class="t" style="left:347.00px;top:254px;letter-spacing:0.062px;">superadmin</span>
<span class="t" style="left:271.25px;top:284px;letter-spacing:-0.210px;">отключен</span>
<span class="t" style="left:25.25px;top:333px;letter-spacing:-0.420px;">Источник:</span>
<span class="t" style="left:109.00px;top:333px;letter-spacing:-0.538px;">По умолчанию</span>
<span class="t" style="left:25.25px;top:363px;letter-spacing:-0.234px;">Каталог с обоями:</span>
<span class="t" style="left:389.50px;top:363px;letter-spacing:-0.145px;">Файл:</span>
<span class="t" style="left:678.25px;top:363px;letter-spacing:-0.050px;">Цвет фона:</span>
<span class="t" style="left:25.25px;top:412px;letter-spacing:-0.219px;">Метод масштабирования окружения рабочего стола:</span>
<span class="t" style="left:344.50px;top:412px;letter-spacing:-0.268px;">Растянуть с обрезкой (по умолчанию)</span>
<span class="t" style="left:25.25px;top:442px;letter-spacing:-0.217px;">Метод масштабирования экранного менеджера:</span>
<span class="t" style="left:344.50px;top:442px;letter-spacing:-0.315px;">Растянуть (по умолчанию)</span>
<span class="t" style="left:25.25px;top:493px;letter-spacing:-0.229px;">Восстановить скелет-файлы домашнего каталога пользователей на значения по умолчанию:</span>
<span class="t" style="left:605.75px;top:493px;letter-spacing:-0.317px;">Включено</span>
<span class="t" style="left:20.50px;top:541px;letter-spacing:-0.216px;">Пользователь</span>
<span class="t" style="left:232.00px;top:541px;letter-spacing:-0.528px;">Приложение</span>
<span class="t" style="left:387.00px;top:541px;letter-spacing:-0.151px;">Окружение рабочего стола</span>
<span class="t" style="left:21.00px;top:557px;letter-spacing:0.000px;">superadmin</span>
<span class="t" style="left:232.00px;top:557px;letter-spacing:0.000px;">xbindkeys</span>
<span class="t" style="left:387.00px;top:557px;letter-spacing:0.000px;">все</span>
<span class="t" style="left:21.00px;top:573px;letter-spacing:0.000px;">superadmin</span>
<span class="t" style="left:232.00px;top:573px;letter-spacing:0.000px;">yakuake</span>
<span class="t" style="left:387.00px;top:573px;letter-spacing:0.766px;">kde</span>
<span class="t" style="left:21.00px;top:589px;letter-spacing:0.000px;">superadmin</span>
<span class="t" style="left:232.00px;top:589px;letter-spacing:0.000px;">guake</span>
<span class="t" style="left:387.00px;top:589px;letter-spacing:0.000px;">gnome, lxde</span>
<span class="t" style="left:21.00px;top:605px;letter-spacing:0.000px;">superadmin, user</span>
<span class="t" style="left:232.00px;top:605px;letter-spacing:0.000px;">plank</span>
<span class="t" style="left:387.00px;top:605px;letter-spacing:0.885px;">xfce</span>
<!-- menu popup -->
<div class="abs" style="left:47px;top:31px;width:240px;height:66px;border:1px solid #4a4a4a;background:#fff"></div>
<span class="t" style="left:55.00px;top:35px;letter-spacing:-0.293px;">Загрузить глобальную конфигурацию</span>
<span class="t" style="left:55.00px;top:56px;letter-spacing:-0.282px;">Загрузить локальную конфигурацию</span>
<span class="t" style="left:55.00px;top:77px;letter-spacing:-0.246px;">Загрузить настройки системы</span>
<div class="abs" style="left:0;top:0;width:800px;height:700px;border:1px solid #6a6a6a;border-top-color:#5c5c5c"></div>

</div>
</body></html>
